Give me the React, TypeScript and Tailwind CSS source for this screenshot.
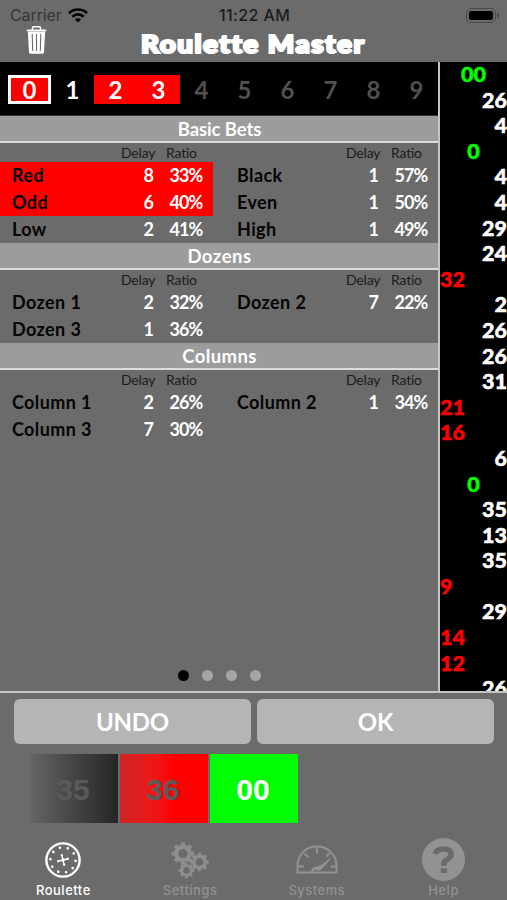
import React from 'react'
import clsx from 'clsx'

interface Bet {
  name: string
  delay: number
  ratio: string
  hot?: boolean
}

interface Section {
  title: string
  titleClass: string
  bets: Bet[]
}

const sections: Section[] = [
  {
    title: 'Basic Bets',
    titleClass: 'tracking-[-0.1px]',
    bets: [
      { name: 'Red', delay: 8, ratio: '33%', hot: true },
      { name: 'Black', delay: 1, ratio: '57%' },
      { name: 'Odd', delay: 6, ratio: '40%', hot: true },
      { name: 'Even', delay: 1, ratio: '50%' },
      { name: 'Low', delay: 2, ratio: '41%' },
      { name: 'High', delay: 1, ratio: '49%' },
    ],
  },
  {
    title: 'Dozens',
    titleClass: 'tracking-[0.5px]',
    bets: [
      { name: 'Dozen 1', delay: 2, ratio: '32%' },
      { name: 'Dozen 2', delay: 7, ratio: '22%' },
      { name: 'Dozen 3', delay: 1, ratio: '36%' },
    ],
  },
  {
    title: 'Columns',
    titleClass: 'tracking-[0.4px]',
    bets: [
      { name: 'Column 1', delay: 2, ratio: '26%' },
      { name: 'Column 2', delay: 1, ratio: '34%' },
      { name: 'Column 3', delay: 7, ratio: '30%' },
    ],
  },
]

const history = [
  '00', '26', '4', '0', '4', '4', '29', '24', '32', '2', '26', '26', '31',
  '21', '16', '6', '0', '35', '13', '35', '9', '29', '14', '12', '26',
]
const redNumbers = ['32', '21', '16', '9', '14', '12']

function StatusBar() {
  return (
    <div className="flex h-[29px] items-center pt-px pl-[10px] pr-[8px] font-['Inter',sans-serif] text-[16px] leading-none">
      <div className="flex flex-1 items-center gap-[7px] text-[#363636]">
        <span className="w-[51px] tracking-[-0.1px]">Carrier</span>
        <svg width="20" height="15" viewBox="0 0 20 15" fill="none" stroke="#000" strokeWidth="2.6">
          <path d="M1 5.2C6 .3 14 .3 19 5.2" />
          <path d="M4.3 8.7c3.3-3.1 8.1-3.1 11.4 0" />
          <path d="M10 14.6l-3-3.1c1.8-1.6 4.2-1.6 6 0z" fill="#000" stroke="none" />
        </svg>
      </div>
      <span className="text-[16px] font-medium tracking-[0.4px] text-[#1c1c1c]">11:22 AM</span>
      <div className="flex flex-1 items-center justify-end gap-[1px]">
        <div className="h-[15px] w-[30px] rounded-[5px] border border-[#4a4a4a] p-[2px]">
          <div className="h-full rounded-[2px] bg-black" />
        </div>
        <div className="h-[5px] w-[2px] rounded-r bg-[#4a4a4a]" />
      </div>
    </div>
  )
}

function Header() {
  return (
    <div className="flex h-[33px] items-start">
      <svg className="ml-[26px] -mt-[3px]" width="21" height="28" viewBox="0 0 21 28" fill="none">
        <path d="M6.5 4V1.7C6.5 1 7 .8 7.5.8h6c.6 0 1 .3 1 .9V4" stroke="#fff" strokeWidth="1.5" />
        <path d="M.5 5.2c0-1 .5-1.6 1.5-1.6h17c1 0 1.5.6 1.5 1.6z" fill="#fff" />
        <path d="M1.8 5.5h17.4L18 26c-.1 1.3-.7 1.8-1.8 1.8H4.8C3.7 27.800 3.100 27.300 3 26z" fill="#fff" />
        <path d="M6.200 8l.5 17M10.500 8v17M14.800 8l-.5 17" stroke="#6b6b6b" strokeWidth="1.100" />
      </svg>
      <h1 className="ml-[94px] mt-px origin-left scale-x-[1.16] whitespace-nowrap text-[24px] leading-[28px] font-black tracking-[1.3px] text-white [-webkit-text-stroke:2.2px_white]">
        Roulette Master
      </h1>
    </div>
  )
}

function DigitStrip() {
  return (
    <div className="flex h-[54px] shrink-0 items-center border-b border-[#333] bg-black pt-[2px] pl-[8px]">
      {[0, 1, 2, 3, 4, 5, 6, 7, 8, 9].map((n) => (
        <div
          key={n}
          className={clsx(
            'flex h-[29px] w-[43px] items-center justify-center text-[24px] leading-none font-bold',
            n < 4 ? 'text-white' : 'text-[#505050]',
            (n === 0 || n === 2 || n === 3) && 'bg-[#ff0000]',
            n === 0 && 'border-[3px] border-white'
          )}
        >
          {n}
        </div>
      ))}
    </div>
  )
}

function ColumnLabels() {
  return (
    <div className="flex h-[19px] items-center pb-px text-[14px] text-[#1b1b1b]">
      <span className="ml-[121px] w-[45px] tracking-[-0.2px]">Delay</span>
      <span className="tracking-[-0.2px]">Ratio</span>
    </div>
  )
}

function BetRow({ bet }: { bet: Bet }) {
  return (
    <div className={clsx('flex h-[27px] items-center pb-px text-[18px] font-bold', bet.hot && 'bg-[#ff0000]')}>
      <span className="w-[118px] pl-[12px] tracking-[0.4px] text-[#050505]">{bet.name}</span>
      <span className="w-[36px] text-right text-white">{bet.delay}</span>
      <span className="ml-[15.500px] w-[36px] tracking-[-0.9px] text-white">{bet.ratio}</span>
    </div>
  )
}

function BetSection({ section }: { section: Section }) {
  return (
    <section>
      <h2
        className={clsx(
          'h-[27px] border-b-2 border-[#dcdcdc] bg-[#9c9c9c] pl-px text-center text-[18.5px] leading-[27px] font-bold text-white',
          section.titleClass
        )}
      >
        {section.title}
      </h2>
      <div className="grid grid-cols-[213px_213px] gap-x-[12px]">
        <ColumnLabels />
        <ColumnLabels />
        {section.bets.map((bet) => (
          <BetRow key={bet.name} bet={bet} />
        ))}
      </div>
    </section>
  )
}

function History() {
  return (
    <div className="w-[67px] overflow-hidden bg-black text-[21.5px] leading-[25.6px] font-black">
      {history.map((n, i) => (
        <div
          key={i}
          className={clsx(
            '[-webkit-text-stroke:0.5px_currentColor]',
            n === '0' || n === '00'
              ? 'text-center text-[#00ff00]'
              : redNumbers.includes(n)
                ? 'text-left text-[#ff0000]'
                : 'text-right text-white'
          )}
        >
          {n}
        </div>
      ))}
    </div>
  )
}

function PageDots() {
  return (
    <div className="mt-auto mb-[10px] flex justify-center gap-[13.300px] pl-px">
      <i className="size-[11px] rounded-full bg-black" />
      <i className="size-[11px] rounded-full bg-[#a5a5a5]" />
      <i className="size-[11px] rounded-full bg-[#a5a5a5]" />
      <i className="size-[11px] rounded-full bg-[#a5a5a5]" />
    </div>
  )
}

function WheelIcon() {
  const pockets = [18, 54, 90, 126, 162, 198, 234, 270, 306, 342]
  return (
    <svg width="36" height="36" viewBox="0 0 36 36" fill="none" stroke="#fff">
      <circle cx="18" cy="18" r="16.600" strokeWidth="2.400" />
      {pockets.map((a) => (
        <circle key={a} cx="18" cy="5.400" r="1.300" fill="#fff" stroke="none" transform={`rotate(${a + 4} 18 18)`} />
      ))}
      <g transform="rotate(-14 18 18)" strokeWidth="1.500">
        <path d="M13 18h10M18 13v10" />
        <path d="M13 17v2M23 17v2M17 13h2M17 23h2" strokeWidth="2" />
        <circle cx="18" cy="18" r="1.600" fill="#fff" stroke="none" />
      </g>
    </svg>
  )
}

function Gear({ x, y, r, teeth }: { x: number; y: number; r: number; teeth: number }) {
  return (
    <g transform={`translate(${x} ${y})`}>
      <circle r={r * 0.6} strokeWidth={r * 0.38} />
      {Array.from({ length: teeth }, (_, i) => (
        <path
          key={i}
          d={`M0 ${-r * 0.7}V${-r}`}
          strokeWidth={r * 0.36}
          transform={`rotate(${(i * 360) / teeth})`}
        />
      ))}
    </g>
  )
}

function GearsIcon() {
  return (
    <svg width="38" height="38" viewBox="0 0 38 38" fill="none" stroke="#8e8e8e">
      <Gear x={12} y={12.5} r={11.2} teeth={8} />
      <Gear x={28.500} y={21} r={9.300} teeth={8} />
      <Gear x={15.500} y={29.500} r={7.800} teeth={8} />
    </svg>
  )
}

function GaugeIcon() {
  return (
    <svg width="42" height="29" viewBox="0 0 42 29" fill="none" stroke="#929292" strokeWidth="2">
      <path d="M1.500 27.500V21C1.500 10 10 1.500 21 1.500S40.500 10 40.500 21v6.500z" />
      <path d="M21 2v6.500M8.500 8.500l4 4M33.500 8l-3 3.500M2 21.500h6M34.500 21.500h6" />
      <path d="M34.500 13.500L24.500 25h-5c1-3 3-4 5.500-4.500z" fill="#929292" strokeWidth="1" />
      <path d="M16 27c.5-3 3-5 7-4.500" />
    </svg>
  )
}

function HelpIcon() {
  return (
    <svg width="43" height="43" viewBox="0 0 43 43" fill="none">
      <circle cx="21.500" cy="21.500" r="21.500" fill="#929292" />
      <path
        d="M13.300 16c.8-3.800 4-5 8.200-5 5 0 7.700 2.200 7.700 5.300 0 2.900-2 4-4.200 5.400-2.200 1.300-3.300 2.200-3.300 5.300v1"
        stroke="#6b6b6b"
        strokeWidth="5.600"
      />
      <path d="M18.700 30.300h6.200v4.700h-6.200z" fill="#6b6b6b" />
    </svg>
  )
}

const tabs = [
  { label: 'Roulette', icon: <WheelIcon />, active: true },
  { label: 'Settings', icon: <GearsIcon /> },
  { label: 'Systems', icon: <GaugeIcon /> },
  { label: 'Help', icon: <HelpIcon /> },
]

function TabBar() {
  return (
    <nav className="mt-[14px] flex">
      {tabs.map((tab) => (
        <div key={tab.label} className="flex flex-1 flex-col items-center">
          <div className="flex h-[45px] items-center">{tab.icon}</div>
          <span
            className={clsx(
              "pt-px font-['Inter',sans-serif] text-[13px] leading-[15px] font-medium tracking-[0.5px]",
              tab.active ? 'text-white' : 'text-[#929292]'
            )}
          >
            {tab.label}
          </span>
        </div>
      ))}
    </nav>
  )
}

export default function App() {
  const buttonClass =
    'h-[45px] w-[237px] rounded-[6px] bg-[#b5b5b5] text-[24px] font-bold tracking-[-0.2px] text-white'
  const tileClass =
    "flex h-[69px] w-[88px] items-center justify-center pt-[2px] pr-[2px] font-['Liberation_Sans',sans-serif] text-[30px] font-bold"

  return (
    <div className="flex h-[900px] w-[507px] flex-col overflow-hidden bg-[#6b6b6b] font-['Lato',sans-serif]">
      <StatusBar />
      <Header />

      <div className="flex h-[631px] border-b-2 border-[#c4c4c4]">
        <div className="flex w-[440px] flex-col border-r-2 border-[#c4c4c4]">
          <DigitStrip />
          {sections.map((section) => (
            <BetSection key={section.title} section={section} />
          ))}
          <PageDots />
        </div>
        <History />
      </div>

      <div className="mt-[6px] flex gap-[6px] pl-[14px]">
        <button className={buttonClass}>UNDO</button>
        <button className={buttonClass}>OK</button>
      </div>

      <div className="mt-[10px] flex gap-[2px] pl-[30px]">
        <div className={clsx(tileClass, 'bg-linear-to-r from-[#666666] to-[#262626] text-[#5a5a5a]')}>35</div>
        <div className={clsx(tileClass, 'bg-linear-to-r from-[#cf2525] to-[#ff0000] to-60% text-[#5a5a5a]')}>36</div>
        <div className={clsx(tileClass, 'bg-[#00ff00] text-white')}>00</div>
      </div>

      <TabBar />
    </div>
  )
}
